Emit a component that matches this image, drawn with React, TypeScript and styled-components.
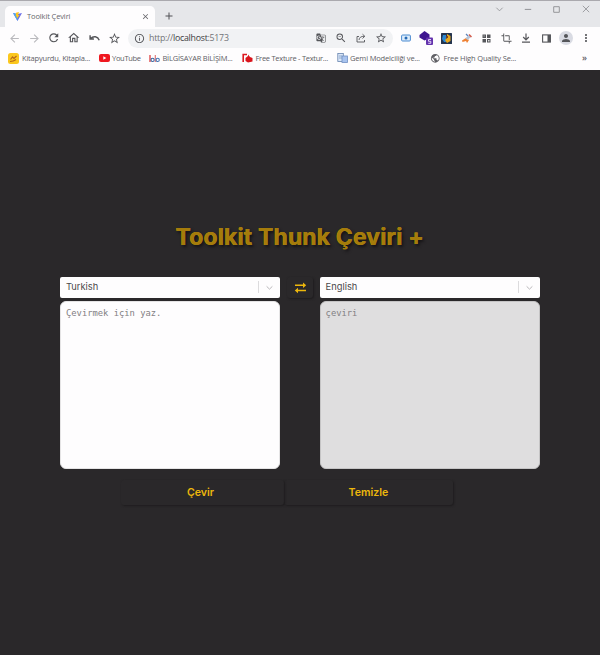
import React from "react";
import styled, { createGlobalStyle } from "styled-components";
import {
  MdArrowBack, MdArrowForward, MdRefresh, MdOutlineHome, MdStarBorder, MdInfoOutline, MdGTranslate,
  MdZoomOut, MdCrop, MdPerson, MdMoreVert, MdPublic, MdClose, MdAdd,
} from "react-icons/md";

const Global = createGlobalStyle`
  * { box-sizing: border-box; }
  html, body { margin: 0; background: #2a282a; overflow: hidden; }
  body { font-family: "Open Sans", "Noto Sans", sans-serif; }
`;

const Window = styled.div`
  width: 600px;
  height: 655px;
  display: flex;
  flex-direction: column;
  background: #2a282a;
`;

const TabStrip = styled.header`
  height: 27px;
  display: flex;
  align-items: flex-end;
  padding-left: 5px;
  background: #e6e7ea;
  border-top: 1px solid #aaa9ae;
`;

const Tab = styled.div`
  width: 150px;
  height: 21px;
  display: flex;
  align-items: center;
  padding: 0 5px 1px 8px;
  background: #fefdfe;
  border-radius: 5px 5px 0 0;
  color: #66666b;
`;

const Label = styled.span<{ $w: number; $size?: number; $ls?: number }>`
  width: ${(p) => p.$w}px;
  flex: none;
  white-space: nowrap;
  font-size: ${(p) => p.$size ?? 7.5}px;
  letter-spacing: ${(p) => p.$ls ?? 0}px;
`;

const TabTitle = styled(Label)`
  margin-left: 5px;
  flex: 1;
`;

const NewTab = styled.div`
  display: flex;
  align-items: center;
  height: 21px;
  margin-left: 8px;
  padding-bottom: 1px;
  color: #505155;
`;

const Controls = styled.div`
  display: flex;
  align-self: flex-start;
  margin-left: auto;
  color: #8d8e92;
`;

const Control = styled.span`
  width: 28.7px;
  height: 16px;
  display: flex;
  align-items: center;
  justify-content: center;
`;

const Toolbar = styled.div`
  height: 22px;
  display: flex;
  align-items: center;
  padding-left: 4px;
  background: #fefdfe;
  color: #55565a;
`;

const Slot = styled.span<{ $muted?: boolean }>`
  width: 20px;
  height: 20px;
  flex: none;
  display: flex;
  align-items: center;
  justify-content: center;
  color: ${(p) => (p.$muted ? "#b9b9bd" : "inherit")};
`;

const AddressBar = styled.div`
  width: 265px;
  height: 19px;
  display: flex;
  align-items: center;
  margin: 0 3px 0 4px;
  padding: 0 2px 0 1px;
  border-radius: 10px;
  background: #f1f2f4;
`;

const Url = styled.span`
  flex: 1;
  font-size: 8.8px;
  letter-spacing: -0.26px;
  color: #717277;
  b { font-weight: 400; color: #3c3d41; }
`;

const Avatar = styled.span`
  width: 14px;
  height: 14px;
  display: flex;
  align-items: center;
  justify-content: center;
  border-radius: 50%;
  background: #d9dbe3;
`;

const Bookmarks = styled.nav`
  height: 21px;
  display: flex;
  align-items: center;
  padding: 0 8px 3px;
  background: #fefdfe;
  color: #606065;
`;

const Bookmark = styled.div<{ $w: number; $gap: number }>`
  width: ${(p) => p.$w}px;
  flex: none;
  display: flex;
  align-items: center;
  gap: ${(p) => p.$gap}px;
  svg { flex: none; }
`;

const Overflow = styled.span`
  margin-left: auto;
  padding-right: 5px;
  font-size: 9px;
  line-height: 12px;
  font-weight: 600;
`;

const Page = styled.main`
  flex: 1;
  display: flex;
  flex-direction: column;
  padding: 147px 60px 0;
`;

const Title = styled.h1`
  height: 40px;
  margin: 0 0 20px;
  align-self: center;
  white-space: nowrap;
  font: 700 23px/40px Inter, sans-serif;
  letter-spacing: 0.12px;
  color: #a57c0b;
  text-shadow: -0.5px -0.5px 0 #b98f10, 1.5px 1.5px 3px #141214;
`;

const Columns = styled.div`
  display: flex;
  justify-content: space-between;
`;

const Column = styled.section`
  width: 220.4px;
  display: flex;
  flex-direction: column;
  gap: 3px;
`;

const Select = styled.div`
  height: 21px;
  display: flex;
  align-items: center;
  padding: 0 0 1px 6px;
  border-radius: 2px;
  background: #fefdfe;
  color: #4b494b;
  font: 400 9.3px/20px Inter, sans-serif;
  svg { margin: 0 6px; }
`;

const Value = styled.span`
  flex: 1;
`;

const Divider = styled.i`
  width: 1px;
  height: 12px;
  background: #dcdbdd;
`;

const Area = styled.div<{ $readonly?: boolean }>`
  height: 168px;
  padding: 6px 5px;
  border: 1px solid ${(p) => (p.$readonly ? "#c5c4c5" : "#e5e4e5")};
  border-radius: 6px;
  background: ${(p) => (p.$readonly ? "#dfdedf" : "#fefdfe")};
  color: #828083;
  font: 8.8px/10px "DejaVu Sans Mono", monospace;
`;

const Raised = styled.div`
  display: flex;
  align-items: center;
  justify-content: center;
  border-radius: 3px;
  color: #edb70c;
  box-shadow: 1px 1px 2px #1e1c1e;
`;

const Swap = styled(Raised)`
  width: 26px;
  height: 21px;
`;

const Actions = styled.div`
  display: flex;
  margin: 11px 0 0 61px;
`;

const Action = styled(Raised)<{ $w: number; $inset: number }>`
  width: ${(p) => p.$w}px;
  height: 25px;
  padding-right: ${(p) => p.$inset}px;
  font: 600 10.6px/25px Inter, sans-serif;
`;

const Vite = () => (
  <svg width="9" height="9" viewBox="0 0 18 18">
    <path d="M0 2 9 18 18 2 9 4Z" fill="#6c6fe8" />
    <path d="M0 2 9 18V9L5 3Z" fill="#4aa6ee" />
    <path d="M12 0 6 1.500 5.600 9H8L7.500 14 13 6H10Z" fill="#ffc61e" />
  </svg>
);

const Line = ({ d, size = 10, w = 1.2, color = "currentColor" }: { d: string; size?: number; w?: number; color?: string }) => (
  <svg width={size} height={size} viewBox="0 0 10 10" fill="none" stroke={color} strokeWidth={w}>
    <path d={d} />
  </svg>
);

const Camera = () => (
  <svg width="10" height="8" viewBox="0 0 10 8">
    <rect x=".6" y="1" width="8.800" height="6" rx="1" fill="#dcecfb" stroke="#4b8bd0" />
    <circle cx="5" cy="4" r="1.500" fill="#2469b5" />
  </svg>
);

const Cube = () => (
  <svg width="14" height="14" viewBox="0 0 14 14">
    <path d="M5.500 0 10.500 3.500V7L5.500 9.500 .5 6.500V4Z" fill="#3e158f" />
    <rect x="7" y="6.500" width="7" height="7.500" rx="1" fill="#6433ad" />
    <path d="M12 8.500H9.500V10.300H11.800V12.300H9.300" fill="none" stroke="#eee4ff" strokeWidth=".9" />
  </svg>
);

const Mosaic = () => (
  <svg width="11" height="11" viewBox="0 0 11 11">
    <rect width="11" height="11" rx=".5" fill="#24344e" />
    <path d="M2 2h3v7H3L1 6Z" fill="#2b87d2" />
    <path d="M6 1 9.500 3V8L6 10 4 7 6 5Z" fill="#e7a71d" />
    <path d="M5 3h2v2H5z" fill="#733b26" />
  </svg>
);

const Rocket = () => (
  <svg width="11" height="11" viewBox="0 0 11 11">
    <path d="M1 7.500 5 5 8 7 6 10 5 8 1.500 9Z" fill="#ee8134" />
    <path d="M4.500 5 8.500 2 10 4 6.500 7Z" fill="#b6c4d8" />
    <path d="M5 1 7 3" stroke="#5d83bb" strokeWidth="1.200" />
    <path d="M8 1.500 10.500 4" stroke="#d45a49" strokeWidth="1.500" />
  </svg>
);

const Tiles = () => (
  <svg width="9" height="9" viewBox="0 0 9 9" fill="#55565a">
    <path d="M.5.5h3.500v3.500h-3.500zM5 .5h3.500v3.500H5zM.5 5h3.500v3.500H.5zM5 5h3.500v3.500H5z" />
    <path d="M1.600 1.600h1v1h-1zM6 6h1.500v1.500H6z" fill="#ddd" />
  </svg>
);

const SidePanel = () => (
  <svg width="9" height="9" viewBox="0 0 9 9">
    <rect x=".6" y=".9" width="7.800" height="7.200" fill="none" stroke="#55565a" strokeWidth="1.100" />
    <path d="M5.500 1h3v7h-3z" fill="#55565a" />
  </svg>
);

const Smile = () => (
  <svg width="11" height="11" viewBox="0 0 11 11">
    <rect width="11" height="11" rx="2.500" fill="#fbc71d" />
    <path d="M2 8.500Q5.500 8.500 8 6.500M2.500 6.500 4.500 4 6 5.500 8.500 3" fill="none" stroke="#b5661b" strokeWidth="1.200" />
  </svg>
);

const YouTube = () => (
  <svg width="11" height="8" viewBox="0 0 11 8">
    <rect width="11" height="8" rx="2" fill="#ef1820" />
    <path d="M4.300 2.200V5.800L7.300 4Z" fill="#fff" />
  </svg>
);

const Monogram = () => (
  <svg width="11" height="9" viewBox="0 0 11 9" fill="none">
    <path d="M1 1V8" stroke="#dd3e3e" strokeWidth="1.300" />
    <circle cx="3.600" cy="5.900" r="1.600" stroke="#35639f" strokeWidth="1.100" />
    <path d="M6.300 1V8" stroke="#dd6e6e" strokeWidth="1.100" />
    <circle cx="8.700" cy="5.900" r="1.600" stroke="#4677b5" strokeWidth="1.100" />
  </svg>
);

const Texture = () => (
  <svg width="11" height="10" viewBox="0 0 11 10">
    <path d="M1.200 9V1.500H5" fill="none" stroke="#dd1920" strokeWidth="1.600" />
    <path d="M3.500 5 6 3V1.500L8 4 10.500 5V8.500L6 9.500 3.500 8Z" fill="#d9141c" />
  </svg>
);

const Pages = () => (
  <svg width="11" height="10" viewBox="0 0 11 10">
    <rect x=".8" y=".5" width="5.500" height="8" fill="#dbe7f8" stroke="#6583ae" strokeWidth=".8" />
    <rect x="5" y="3" width="5.500" height="6.500" fill="#a8c3ee" stroke="#708fc2" strokeWidth=".8" />
    <path d="M2 3h3M2 5h3" stroke="#5f81b4" strokeWidth=".6" />
  </svg>
);

const SwapArrows = () => (
  <svg width="13" height="12" viewBox="0 0 13 12" stroke="currentColor" strokeWidth="1.500">
    <path d="M1 3.300H9.500M12 8.500H3.500" fill="none" />
    <path d="M9 .6 12.200 3.300 9 6ZM4 5.800 .8 8.500 4 11.200Z" fill="currentColor" stroke="none" />
  </svg>
);

const Language = ({ children }: { children: string }) => (
  <Select>
    <Value>{children}</Value>
    <Divider />
    <Line d="M1.800 3.700 5 6.800 8.200 3.700" size={9} w={1.100} color="#b8b6b9" />
  </Select>
);

export default function App() {
  return (
    <Window>
      <Global />
      <TabStrip>
        <Tab>
          <Vite />
          <TabTitle $w={100} $ls={-0.12}>Toolkit Çeviri</TabTitle>
          <MdClose size={9} />
        </Tab>
        <NewTab><MdAdd size={12} /></NewTab>
        <Controls>
          <Control><Line d="M1.500 3 5 6.500 8.500 3" w={0.9} size={9} /></Control>
          <Control><Line d="M1 5.500H9" size={8} /></Control>
          <Control><Line d="M1 1H9V9H1Z" w={1.3} size={7} /></Control>
          <Control><Line d="M1 1 9 9M9 1 1 9" w={1} size={8} /></Control>
        </Controls>
      </TabStrip>
      <Toolbar>
        <Slot $muted><MdArrowBack size={13} /></Slot>
        <Slot $muted><MdArrowForward size={13} /></Slot>
        <Slot><MdRefresh size={13.500} /></Slot>
        <Slot><MdOutlineHome size={13.500} /></Slot>
        <Slot><Line d="M1 2V5.500H4.500M1.300 5.200C4 2.300 8 3 9.300 6.500" size={11} w={1.300} /></Slot>
        <Slot><MdStarBorder size={13} /></Slot>
        <AddressBar>
          <Slot><MdInfoOutline size={11} /></Slot>
          <Url>http://<b>localhost</b>:5173</Url>
          <Slot><MdGTranslate size={10} /></Slot>
          <Slot><MdZoomOut size={12} /></Slot>
          <Slot><Line d="M3 3.500H1V9H8.500V7M3 7C3.300 4.300 5 3.300 8.500 3.300M6.500 1.200 8.800 3.300 6.500 5.500" w={0.9} /></Slot>
          <Slot><MdStarBorder size={12} /></Slot>
        </AddressBar>
        <Slot><Camera /></Slot>
        <Slot><Cube /></Slot>
        <Slot><Mosaic /></Slot>
        <Slot><Rocket /></Slot>
        <Slot><Tiles /></Slot>
        <Slot><MdCrop size={11} /></Slot>
        <Slot><Line d="M5 .5V6.500M2.200 4 5 6.800 7.800 4M1 9.200H9" size={10} w={1.200} /></Slot>
        <Slot><SidePanel /></Slot>
        <Slot><Avatar><MdPerson size={12} /></Avatar></Slot>
        <Slot><MdMoreVert size={12} /></Slot>
      </Toolbar>
      <Bookmarks>
        <Bookmark $w={91} $gap={3}><Smile /><Label $w={70} $ls={-0.19}>Kitapyurdu, Kitapla...</Label></Bookmark>
        <Bookmark $w={50} $gap={2}><YouTube /><Label $w={35} $ls={-0.3}>YouTube</Label></Bookmark>
        <Bookmark $w={93} $gap={2.500}><Monogram /><Label $w={70} $ls={-0.22}>BİLGİSAYAR BİLİŞİM...</Label></Bookmark>
        <Bookmark $w={95} $gap={2.500}><Texture /><Label $w={74} $ls={-0.27}>Free Texture - Textur...</Label></Bookmark>
        <Bookmark $w={93} $gap={2}><Pages /><Label $w={74} $ls={-0.16}>Gemi Modelciliği ve...</Label></Bookmark>
        <Bookmark $w={95} $gap={3}><MdPublic size={10.500} /><Label $w={74} $ls={-0.16}>Free High Quality Se...</Label></Bookmark>
        <Overflow>»</Overflow>
      </Bookmarks>
      <Page>
        <Title>Toolkit Thunk Çeviri +</Title>
        <Columns>
          <Column>
            <Language>Turkish</Language>
            <Area>Çevirmek için yaz.</Area>
          </Column>
          <Swap><SwapArrows /></Swap>
          <Column>
            <Language>English</Language>
            <Area $readonly>çeviri</Area>
          </Column>
        </Columns>
        <Actions>
          <Action $w={163} $inset={4}>Çevir</Action>
          <Action $w={169} $inset={0}>Temizle</Action>
        </Actions>
      </Page>
    </Window>
  );
}
